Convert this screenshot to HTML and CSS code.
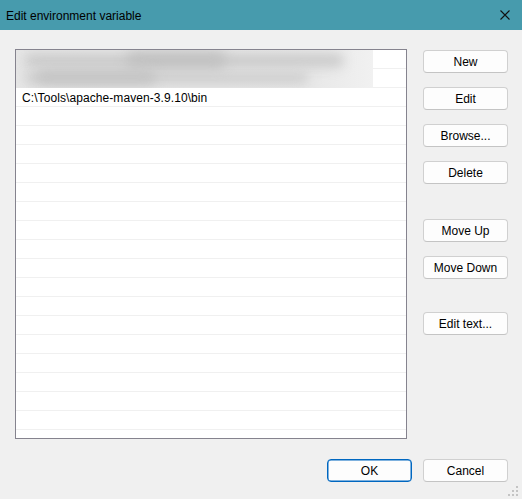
FILE: index.html
```html
<!DOCTYPE html>
<html lang="en">
<head>
<meta charset="utf-8">
<title>Edit environment variable</title>
<link rel="stylesheet" href="styles.css">
</head>
<body>
<div class="window">
  <div class="titlebar">
    <span class="title">Edit environment variable</span>
    <svg class="close" width="10" height="10" viewBox="0 0 10 10"><path d="M0.5 0.5L9.5 9.5M9.5 0.5L0.5 9.5" stroke="#111" stroke-width="1.1" fill="none"/></svg>
  </div>
  <div class="content">
    <div class="list">
      <div class="row"></div>
      <div class="row"></div>
      <div class="row"><span class="item">C:\Tools\apache-maven-3.9.10\bin</span></div>
      <div class="row"></div><div class="row"></div><div class="row"></div><div class="row"></div>
      <div class="row"></div><div class="row"></div><div class="row"></div><div class="row"></div>
      <div class="row"></div><div class="row"></div><div class="row"></div><div class="row"></div>
      <div class="row"></div><div class="row"></div><div class="row"></div><div class="row"></div>
      <div class="row"></div><div class="row"></div>
      <div class="blur"><div class="smudge s1"></div><div class="smudge s2"></div><div class="smudge s3"></div><div class="smudge s4"></div></div>
    </div>
    <div class="buttons">
      <button class="btn">New</button>
      <button class="btn">Edit</button>
      <button class="btn">Browse...</button>
      <button class="btn">Delete</button>
      <button class="btn group">Move Up</button>
      <button class="btn">Move Down</button>
      <button class="btn group2">Edit text...</button>
    </div>
  </div>
  <div class="footer">
    <button class="btn primary">OK</button>
    <button class="btn">Cancel</button>
  </div>
  <svg class="grip" width="12" height="12" viewBox="0 0 12 12">
    <rect x="8" y="0" width="2" height="2" fill="#c4c4c4"/>
    <rect x="4" y="4" width="2" height="2" fill="#c4c4c4"/>
    <rect x="8" y="4" width="2" height="2" fill="#c4c4c4"/>
    <rect x="0" y="8" width="2" height="2" fill="#c4c4c4"/>
    <rect x="4" y="8" width="2" height="2" fill="#c4c4c4"/>
    <rect x="8" y="8" width="2" height="2" fill="#c4c4c4"/>
  </svg>
</div>
</body>
</html>
```
FILE: styles.css
```css
html, body {
  margin: 0;
  padding: 0;
}
body {
  font-family: "Liberation Sans", Arial, sans-serif;
  font-size: 12px;
  color: #000;
}
.window {
  position: relative;
  width: 522px;
  height: 499px;
  background: #f0f0f0;
  display: flex;
  flex-direction: column;
  overflow: hidden;
}
.titlebar {
  height: 30px;
  flex: none;
  background: #479bad;
  display: flex;
  align-items: center;
  justify-content: space-between;
  padding-left: 6px;
}
.title {
  font-size: 12px;
  color: #000;
  margin-top: 1px;
}
.close {
  margin-right: 12px;
  display: block;
}
.content {
  display: flex;
  gap: 16px;
  padding: 19px 14px 0 15px;
}
.list {
  position: relative;
  box-sizing: border-box;
  width: 392px;
  height: 390px;
  border: 1px solid #85838e;
  background: #fff;
  overflow: hidden;
}
.row {
  height: 18px;
  border-bottom: 1px solid #f0f0f0;
  display: flex;
  align-items: center;
  padding-left: 6px;
}
.item {
  line-height: 18px;
  margin-top: 1px;
  letter-spacing: 0.08px;
}
.blur {
  position: absolute;
  left: 0;
  top: 0;
  width: 357px;
  height: 38px;
  background: linear-gradient(90deg, #e6e6e6 0%, #e9e9e9 85%, #f1f1f1 100%);
  overflow: hidden;
}
.smudge {
  position: absolute;
  background: #c9c9c9;
  border-radius: 8px;
  filter: blur(6px);
}
.s1 { left: 8px; top: 4px; width: 320px; height: 13px; }
.s2 { left: 8px; top: 22px; width: 285px; height: 12px; background: #cdcdcd; }
.s3 { left: 110px; top: 2px; width: 100px; height: 16px; background: #c2c2c2; }
.s4 { left: 20px; top: 20px; width: 120px; height: 14px; background: #c4c4c4; }
.buttons {
  display: flex;
  flex-direction: column;
  gap: 14px;
  padding-top: 1px;
}
.btn {
  box-sizing: border-box;
  width: 85px;
  height: 23px;
  padding: 0;
  font-family: "Liberation Sans", Arial, sans-serif;
  font-size: 12px;
  color: #000;
  background: #fdfdfd;
  border: 1px solid #d0d0d0;
  border-bottom-color: #c4c4c4;
  border-radius: 4px;
}
.group { margin-top: 21px; }
.group2 { margin-top: 19px; }
.footer {
  display: flex;
  justify-content: flex-end;
  gap: 11px;
  padding: 20px 14px 0 0;
}
.primary {
  border: 1px solid #0067c0;
  box-shadow: inset 0 0 0 0.5px #0067c0;
}
.grip {
  position: absolute;
  right: 2px;
  bottom: 1px;
}
```
